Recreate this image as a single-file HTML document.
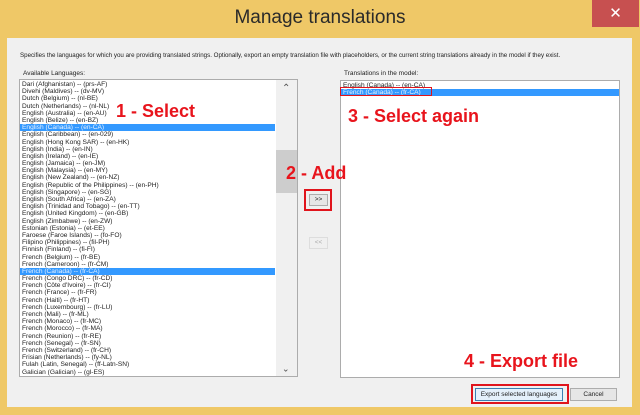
<!DOCTYPE html><html><head><style>
body{margin:0;width:640px;height:415px;background:#efc867;font-family:"Liberation Sans",sans-serif;position:relative;overflow:hidden}
.a{position:absolute}
.title{left:0;width:640px;top:7px;text-align:center;font-size:19px;color:#2a2a2a}
.close{left:592px;top:0;width:47px;height:27px;background:#c75050;color:#fff;text-align:center;font-size:15px;line-height:27px}
.panel{left:7px;top:38px;width:625px;height:369px;background:#f0f0f0}
.list{background:#fff;border:1px solid #acacac;overflow:hidden}
.row{height:7.2px;line-height:7.2px;font-size:6.6px;color:#222;padding-left:2px;white-space:nowrap}
.sel{background:#3399ff;color:#e8f2ff}
.lbl{font-size:6.5px;color:#222}
.btn{background:#e6e6e6;border:1px solid #adadad;font-size:6.5px;text-align:center;color:#222}
.ann{color:#e8141c;font-weight:bold;font-size:18px;white-space:nowrap}
.red{border:2px solid #e0141c}
</style></head><body>
<div class="a title">Manage translations</div>
<div class="a close">✕</div>
<div class="a panel"></div>
<div class="a lbl" style="left:20px;top:52px;font-size:6.2px">Specifies the languages for which you are providing translated strings. Optionally, export an empty translation file with placeholders, or the current string translations already in the model if they exist.</div>
<div class="a lbl" style="left:23px;top:70px">Available Languages:</div>
<div class="a lbl" style="left:344px;top:70px">Translations in the model:</div>
<div class="a list" style="left:19px;top:79px;width:277px;height:296px">
<div style="padding-top:1px">
<div class="row">Dari (Afghanistan) -- (prs-AF)</div><div class="row">Divehi (Maldives) -- (dv-MV)</div><div class="row">Dutch (Belgium) -- (nl-BE)</div><div class="row">Dutch (Netherlands) -- (nl-NL)</div><div class="row">English (Australia) -- (en-AU)</div><div class="row">English (Belize) -- (en-BZ)</div><div class="row sel" style="width:253px">English (Canada) -- (en-CA)</div><div class="row">English (Caribbean) -- (en-029)</div><div class="row">English (Hong Kong SAR) -- (en-HK)</div><div class="row">English (India) -- (en-IN)</div><div class="row">English (Ireland) -- (en-IE)</div><div class="row">English (Jamaica) -- (en-JM)</div><div class="row">English (Malaysia) -- (en-MY)</div><div class="row">English (New Zealand) -- (en-NZ)</div><div class="row">English (Republic of the Philippines) -- (en-PH)</div><div class="row">English (Singapore) -- (en-SG)</div><div class="row">English (South Africa) -- (en-ZA)</div><div class="row">English (Trinidad and Tobago) -- (en-TT)</div><div class="row">English (United Kingdom) -- (en-GB)</div><div class="row">English (Zimbabwe) -- (en-ZW)</div><div class="row">Estonian (Estonia) -- (et-EE)</div><div class="row">Faroese (Faroe Islands) -- (fo-FO)</div><div class="row">Filipino (Philippines) -- (fil-PH)</div><div class="row">Finnish (Finland) -- (fi-FI)</div><div class="row">French (Belgium) -- (fr-BE)</div><div class="row">French (Cameroon) -- (fr-CM)</div><div class="row sel" style="width:253px">French (Canada) -- (fr-CA)</div><div class="row">French (Congo DRC) -- (fr-CD)</div><div class="row">French (Côte d'Ivoire) -- (fr-CI)</div><div class="row">French (France) -- (fr-FR)</div><div class="row">French (Haiti) -- (fr-HT)</div><div class="row">French (Luxembourg) -- (fr-LU)</div><div class="row">French (Mali) -- (fr-ML)</div><div class="row">French (Monaco) -- (fr-MC)</div><div class="row">French (Morocco) -- (fr-MA)</div><div class="row">French (Reunion) -- (fr-RE)</div><div class="row">French (Senegal) -- (fr-SN)</div><div class="row">French (Switzerland) -- (fr-CH)</div><div class="row">Frisian (Netherlands) -- (fy-NL)</div><div class="row">Fulah (Latin, Senegal) -- (ff-Latn-SN)</div><div class="row">Galician (Galician) -- (gl-ES)</div>
</div>
<div class="a" style="left:256px;top:0;width:21px;height:296px;background:#f0f0f0"></div>
<div class="a" style="left:256px;top:70px;width:21px;height:43px;background:#cdcdcd"></div>
<div class="a" style="left:262px;top:3px;font-size:10px;color:#555">⌃</div>
<div class="a" style="left:262px;top:282px;font-size:9px;color:#555;transform:rotate(180deg)">⌃</div>
</div>
<div class="a list" style="left:340px;top:80px;width:278px;height:296px">
<div style="padding-top:1px"><div class="row">English (Canada) -- (en-CA)</div><div class="row sel">French (Canada) -- (fr-CA)</div></div>
</div>
<div class="a red" style="left:340px;top:87px;width:90px;height:7px;border-width:1.5px"></div>
<div class="a btn" style="left:309px;top:194px;width:17px;height:10px;line-height:10px">&gt;&gt;</div>
<div class="a red" style="left:304px;top:189px;width:24px;height:18px"></div>
<div class="a btn" style="left:309px;top:237px;width:17px;height:10px;line-height:10px;color:#aaa;background:#f0f0f0;border-color:#ddd">&lt;&lt;</div>
<div class="a btn" style="left:475px;top:388px;width:86px;height:11px;line-height:11px;border-color:#3c7fb1;background:#e5f1fb">Export selected languages</div>
<div class="a btn" style="left:570px;top:388px;width:45px;height:11px;line-height:11px">Cancel</div>
<div class="a red" style="left:471px;top:384px;width:94px;height:16px"></div>
<div class="a ann" style="left:116px;top:101px">1 - Select</div>
<div class="a ann" style="left:286px;top:163px">2 - Add</div>
<div class="a ann" style="left:348px;top:106px">3 - Select again</div>
<div class="a ann" style="left:464px;top:351px">4 - Export file</div>
</body></html>
